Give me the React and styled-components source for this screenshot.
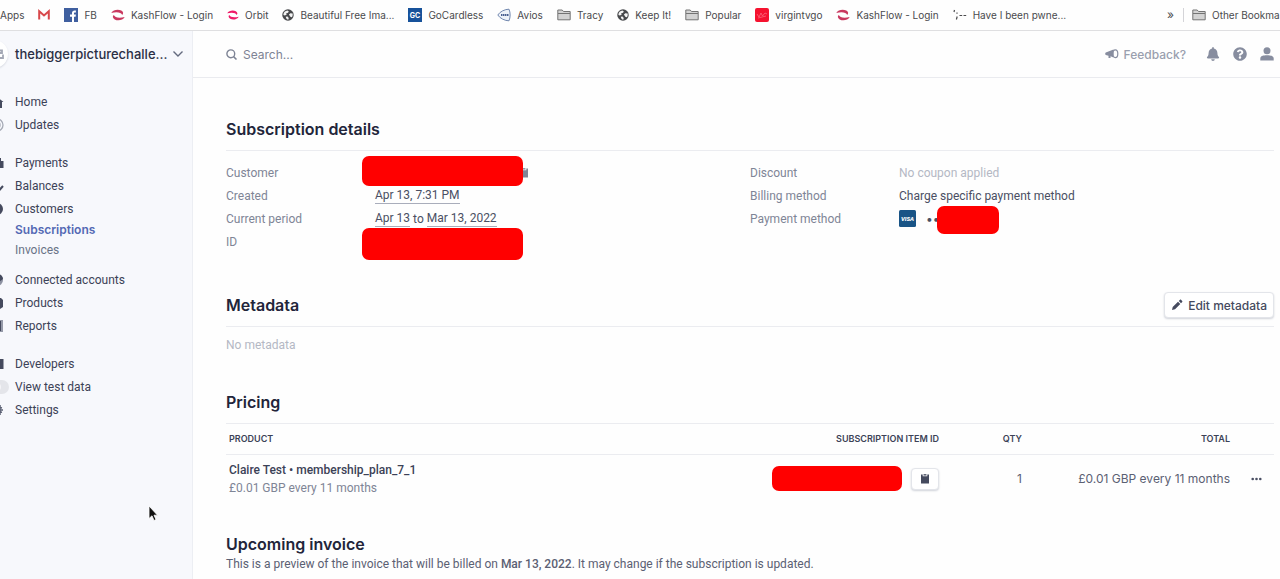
import styled, { createGlobalStyle } from "styled-components";
import { FaBell, FaQuestionCircle } from "react-icons/fa";

const inter = `"Inter", "Liberation Sans", sans-serif`;

const GlobalStyle = createGlobalStyle`
  * {
    box-sizing: border-box;
  }
  body {
    margin: 0;
    overflow-x: hidden;
    background: #fefefe;
    color: #3c4257;
    font-family: "Roboto", "Liberation Sans", sans-serif;
    font-size: 12px;
    line-height: 18px;
  }
  a {
    color: inherit;
    text-decoration: none;
  }
  button, input {
    font-family: ${inter};
  }
`;

const Page = styled.div`
  display: flex;
  flex-direction: column;
  min-height: 100vh;
`;

const BookmarkBar = styled.nav`
  display: flex;
  align-items: center;
  gap: 14px;
  height: 31px;
  border-bottom: 1px solid #dfdfe1;
  background: #fefefe;
  color: #4a4a4d;
  font-family: ${inter};
  font-size: 10px;
  white-space: nowrap;
  overflow: hidden;
`;

const Bookmark = styled.a`
  display: flex;
  align-items: center;
  flex-shrink: 0;
  gap: 6px;
`;

const BookmarkSpacer = styled.div`
  flex: 1;
`;

const OtherBookmarks = styled.div`
  display: flex;
  align-items: center;
  flex: 0 0 113px;
  gap: 8px;
`;

const Chevrons = styled.span`
  width: 8px;
  font-size: 12px;
`;

const Divider = styled.span`
  width: 1px;
  height: 14px;
  background: #d4d4d8;
`;

const Body = styled.div`
  display: flex;
  flex: 1;
`;

const Sidebar = styled.aside`
  flex: 0 0 193px;
  min-width: 0;
  border-right: 1px solid #eceef3;
  background: #f7f8fc;
`;

const Account = styled.button`
  display: flex;
  align-items: center;
  width: 100%;
  height: 46px;
  padding: 0 8px 0 0;
  border: 0;
  background: none;
  color: #2a2f45;
  font-size: 13px;
  font-weight: 500;
  text-align: left;
`;

const AccountName = styled.span`
  flex: 1;
  white-space: nowrap;
`;

const Avatar = styled.span`
  display: flex;
  align-items: center;
  justify-content: flex-end;
  width: 20px;
  height: 28px;
  margin-left: -12px;
  margin-right: 7px;
  padding-right: 4px;
  border-radius: 0 14px 14px 0;
  background: #fff;
  box-shadow: 0 1px 2px #d5d8e0;
`;

const Menu = styled.nav`
  display: flex;
  flex-direction: column;
  gap: 15px;
  padding-top: 13px;
`;

const MenuGroup = styled.div`
  display: flex;
  flex-direction: column;
`;

const MenuItem = styled.a`
  display: flex;
  align-items: center;
  gap: 11px;
  height: 23px;
  margin-left: -12px;
  color: #3c4257;
`;

const SubMenu = styled.div`
  display: flex;
  flex-direction: column;
  padding: 0 0 8px 15px;
`;

const SubItem = styled.a`
  line-height: 20px;
  color: ${(props) => (props.$active ? "#5469b4" : "#697386")};
  font-family: ${(props) => (props.$active ? inter : "inherit")};
  font-weight: ${(props) => (props.$active ? 600 : 400)};
`;

const Main = styled.main`
  flex: 1;
  min-width: 0;
`;

const TopBar = styled.header`
  display: flex;
  align-items: center;
  height: 47px;
  padding: 0 6px 0 33px;
  border-bottom: 1px solid #eaebef;
  color: #878d9f;
`;

const SearchBox = styled.label`
  display: flex;
  align-items: center;
  flex: 1;
  gap: 6px;
`;

const SearchInput = styled.input`
  flex: 1;
  padding: 0;
  border: 0;
  outline: 0;
  background: none;
  font-size: 12px;
  &::placeholder {
    color: #7d8394;
    opacity: 1;
  }
`;

const Feedback = styled.button`
  display: flex;
  align-items: center;
  gap: 5px;
  margin-right: 20px;
  padding: 0;
  border: 0;
  background: none;
  color: #9a9fae;
  font-size: 12px;
  font-weight: 500;
`;

const IconButton = styled.button`
  display: flex;
  margin-right: ${(props) => (props.$last ? 0 : 13)}px;
  padding: 0;
  border: 0;
  background: none;
  color: #878d9f;
`;

const Content = styled.div`
  padding: 30px 6px 0 33px;
`;

const Section = styled.section`
  margin-bottom: ${(props) => props.$gap}px;
`;

const SectionHeader = styled.div`
  display: flex;
  align-items: center;
  justify-content: space-between;
  height: 43px;
  border-bottom: 1px solid #ebecf0;
`;

const Title = styled.h2`
  margin: 0;
  color: #22253a;
  font-family: ${inter};
  font-size: 16px;
  line-height: 20px;
  font-weight: 600;
`;

const Columns = styled.div`
  display: grid;
  grid-template-columns: 1fr 1fr;
  padding-top: 10px;
`;

const Details = styled.dl`
  display: grid;
  grid-template-columns: 149px 1fr;
  grid-auto-rows: 23px;
  align-items: center;
  align-content: start;
  margin: 0;
`;

const Term = styled.dt`
  color: #7f8596;
`;

const Value = styled.dd`
  display: flex;
  align-items: center;
  position: relative;
  height: 23px;
  margin: 0;
  gap: 3px;
  color: ${(props) => (props.$muted ? "#b4b8c4" : "#4a4f63")};
`;

const DateText = styled.span`
  border-bottom: 1px solid #a9adbb;
  line-height: 15px;
`;

const Redaction = styled.span`
  display: block;
  width: ${(props) => props.$width}px;
  height: ${(props) => props.$height}px;
  border-radius: 7px;
  background: #f00;
`;

const Cover = styled(Redaction)`
  position: absolute;
  top: ${(props) => props.$top}px;
  left: ${(props) => props.$left}px;
`;

const CopyMark = styled.span`
  display: flex;
  margin-left: 144px;
  color: #7f8596;
`;

const CardDots = styled.span`
  margin-left: 7px;
  font-family: ${inter};
  font-size: 12px;
`;

const Button = styled.button`
  display: flex;
  align-items: center;
  justify-content: center;
  gap: 5px;
  height: ${(props) => (props.$small ? 22 : 26)}px;
  padding: 0 ${(props) => (props.$small ? 8 : 6)}px;
  border: 1px solid #e3e5ea;
  border-radius: 4px;
  background: #fff;
  box-shadow: 0 1px 2px #d0d3da;
  color: #454a5e;
  font-size: 12px;
  font-weight: 500;
`;

const Empty = styled.p`
  margin: 0;
  padding-top: 9px;
  color: #b4b8c4;
`;

const Table = styled.table`
  width: 100%;
  border-collapse: collapse;
  table-layout: fixed;
`;

const HeadCell = styled.th`
  width: ${(props) => (props.$width ? `${props.$width}px` : "auto")};
  height: 30px;
  padding: 0 0 0 3px;
  border-bottom: 1px solid #ebecf0;
  font-family: ${inter};
  font-size: 9px;
  font-weight: 600;
  text-align: ${(props) => props.$align || "left"};
`;

const Cell = styled.td`
  height: 49px;
  padding: 0 0 0 3px;
  color: #5b6073;
  font-family: ${(props) => (props.$align ? inter : "inherit")};
  text-align: ${(props) => props.$align || "left"};
`;

const ProductName = styled.div`
  color: #3c4257;
  font-weight: 500;
`;

const ProductPrice = styled.div`
  color: #7f8596;
`;

const ItemId = styled.div`
  display: flex;
  align-items: center;
  justify-content: flex-end;
  gap: 9px;
`;

const MoreButton = styled.button`
  display: inline-flex;
  padding: 0 12px 0 0;
  border: 0;
  background: none;
  color: #4a4f63;
  vertical-align: middle;
`;

const Note = styled.p`
  margin: 0;
  color: #5b6073;
  line-height: 20px;
`;

const Strong = styled.strong`
  font-weight: 500;
`;

const Pointer = styled.svg`
  position: fixed;
  top: 505px;
  left: 148px;
`;

const GmailIcon = () => (
  <svg width="12" height="12" viewBox="0 0 12 12">
    <path d="M1.2 10.500V2.200L6 6.400l4.800-4.200v8.300" fill="none" stroke="#d8474a" strokeWidth="2" />
  </svg>
);

const FacebookIcon = () => (
  <svg width="14" height="14" viewBox="0 0 14 14">
    <rect width="14" height="14" fill="#3f5f9f" />
    <path d="M8 14V8.800H6V6.600h2V5c0-1.800 1-2.600 2.600-2.600h1.300v2h-1c-.7 0-.9.300-.9.900v1.300h1.900l-.3 2.200H10V14z" fill="#fff" />
  </svg>
);

const SwirlIcon = ({ color = "#c9385f", size = 14 }) => (
  <svg width={size} height={size} viewBox="0 0 14 14">
    <path d="M.3 5C2 1.800 7 .8 10.300 2.600c2.200 1.300 2.400 3.200.9 4.300-1-2.400-5-3.400-10.900-1.900z" fill={color} />
    <path d="M13.700 9C12 12.200 7 13.200 3.700 11.400c-2.200-1.300-2.400-3.200-.9-4.300 1 2.400 5 3.400 10.900 1.900z" fill={color} />
  </svg>
);

const GlobeIcon = () => (
  <svg width="12" height="12" viewBox="0 0 13 13">
    <circle cx="6.500" cy="6.500" r="6.200" fill="#47484b" />
    <path d="M1.500 6.500C1.500 3.500 3.500 1.800 6 1.500L7.500 3 6 4.200l-1.500.5.5 1.500-2 .8zM7.500 6l1.500-1.500 2.500.5c.3 1.500 0 3-.8 4L9 8.500zM4 8.500l2-.3 1.300 1.500-.5 2C5.500 11.600 4.500 10.500 4 8.500z" fill="#f3f3f3" />
  </svg>
);

const GoCardlessIcon = () => (
  <svg width="14" height="14" viewBox="0 0 14 14">
    <rect width="14" height="14" fill="#17529a" />
    <text x="7" y="9.500" fill="#fff" fontSize="7" fontWeight="700" textAnchor="middle">GC</text>
  </svg>
);

const AviosIcon = () => (
  <svg width="14" height="14" viewBox="0 0 14 14">
    <path d="M.8 7C3 3.500 8 1.200 12 1.200c1.500 3.500 1.500 8 0 11.600C8 12.800 3 10.500.8 7z" fill="#eef2f9" stroke="#7187ae" />
    <path d="M4 7h8" stroke="#4a6090" strokeWidth="2" strokeDasharray="1.500 .5" />
  </svg>
);

const FolderIcon = () => (
  <svg width="14" height="12" viewBox="0 0 14 12">
    <path d="M.8 10.800V1h4.400l1.300 1.500h6.700v8.300z" fill="#d3d3d3" stroke="#747474" />
    <path d="M1 4.500h12" stroke="#747474" />
  </svg>
);

const VirginIcon = () => (
  <svg width="14" height="14" viewBox="0 0 14 14">
    <rect width="14" height="14" rx="2" fill="#f5122f" />
    <path d="M2 6l2 3 2-4 1.500 3L10 5l2 1M3 10l8-2" fill="none" stroke="#f9697e" strokeWidth=".8" />
  </svg>
);

const PwnedIcon = () => (
  <svg width="14" height="14" viewBox="0 0 14 14">
    <path d="M1.500 2l-.5 2M4 4.500v1.300M4.200 8.500l-.8 3M6.500 7.500h2.700M10.500 7.500h2.700" stroke="#4a4a4d" strokeWidth="1.200" />
  </svg>
);

const ShopIcon = () => (
  <svg width="12" height="14" viewBox="0 0 12 14">
    <path d="M3 3.500h7v2.500H6v5h5V7.500" fill="none" stroke="#a4a8b5" strokeWidth="1.800" />
  </svg>
);

const ChevronIcon = () => (
  <svg width="12" height="8" viewBox="0 0 12 8">
    <path d="M1.500 1.500L6 6l4.500-4.500" fill="none" stroke="#636a7e" strokeWidth="1.400" />
  </svg>
);

const SearchIcon = () => (
  <svg width="11" height="11" viewBox="0 0 11 11">
    <circle cx="4.800" cy="4.800" r="3.900" fill="none" stroke="#7d8394" strokeWidth="1.400" />
    <path d="M7.600 7.600l2.900 2.900" stroke="#7d8394" strokeWidth="1.500" />
  </svg>
);

const MegaphoneIcon = () => (
  <svg width="14" height="12" viewBox="0 0 14 12">
    <path d="M8.500 1.500v8L5.500 8.300V10H3.500V7.800L.8 7C0 6.500 0 5 .8 4.500z" fill="#878d9f" />
    <ellipse cx="10.300" cy="5.700" rx="2.500" ry="3.900" fill="none" stroke="#878d9f" strokeWidth="1.200" />
  </svg>
);

const PersonIcon = () => (
  <svg width="14" height="14" viewBox="0 0 14 14">
    <circle cx="7" cy="3.700" r="3.500" fill="currentColor" />
    <path d="M.3 13.500v-2C.3 9 3 8.300 7 8.300s6.700.7 6.700 3.200v2z" fill="currentColor" />
  </svg>
);

const ClipboardIcon = () => (
  <svg width="10" height="11" viewBox="0 0 10 11">
    <path d="M1 1.500h1.700v1.800h4.600V1.500H9v9H1z" fill="currentColor" />
    <path d="M3.500 2.500V1.300h.8a.8.800 0 0 1 1.400 0h.8v1.200z" fill="currentColor" />
  </svg>
);

const PencilIcon = () => (
  <svg width="12" height="12" viewBox="0 0 12 12">
    <path d="M1 11l.7-3L7 2.700 9.300 5 4 10.300zM7.800 2L9 .8c.3-.3.700-.3 1 0L11.200 2c.3.300.3.700 0 1L10 4.200z" fill="currentColor" />
  </svg>
);

const DotsIcon = () => (
  <svg width="11" height="4" viewBox="0 0 11 4">
    <circle cx="1.700" cy="2" r="1.300" fill="currentColor" />
    <circle cx="5.500" cy="2" r="1.300" fill="currentColor" />
    <circle cx="9.300" cy="2" r="1.300" fill="currentColor" />
  </svg>
);

const VisaIcon = () => (
  <svg width="17" height="17" viewBox="0 0 17 17">
    <rect width="17" height="17" rx="1.500" fill="#195486" />
    <text x="8.500" y="10.700" fill="#fff" fontSize="6" fontWeight="800" fontStyle="italic" textAnchor="middle">VISA</text>
  </svg>
);

const menuShapes = {
  home: <path d="M8 2l7.500 6H14v6h-3v-4H6v4H3V7H1z" />,
  updates: (
    <g fill="none" stroke="#a5a9b5" strokeWidth="1.300">
      <circle cx="9" cy="8" r="6" />
      <circle cx="9" cy="8" r="3" />
    </g>
  ),
  payments: <path d="M2 6h9V3h2v3h2.500v7H2z" />,
  balances: <path d="M8 10l3 2.500L15 8" fill="none" stroke="#454a5e" strokeWidth="2" />,
  customers: <circle cx="9" cy="8" r="6" />,
  connected: (
    <g>
      <circle cx="9" cy="8" r="6" fill="#8d92a2" />
      <path d="M7 2c5-1 8 2 8 5l-4 3z" />
    </g>
  ),
  products: <path d="M2 3h11l2 2v7l-3 2H2z" />,
  reports: (
    <g>
      <path d="M2 2h13v12H2z" fill="#9599a8" />
      <path d="M10 3h3v10h-3z" />
    </g>
  ),
  developers: <path d="M1 3h14.500v10H1z" />,
  settings: <path d="M8 8h7M12 3v10M10 5l4 1M10 11l4-1" fill="none" stroke="#5b6073" strokeWidth="1.500" />,
};

const MenuIcon = ({ name }) => (
  <svg width="16" height="16" viewBox="0 0 16 16" fill="#454a5e">
    {menuShapes[name]}
  </svg>
);

const Toggle = styled.svg`
  margin-right: -6px;
`;

const ToggleIcon = () => (
  <Toggle width="22" height="14" viewBox="0 0 22 14">
    <rect width="21" height="14" rx="7" fill="#e4e5ea" />
    <circle cx="8" cy="7" r="5" fill="#f5f5f8" />
  </Toggle>
);

const bookmarks = [
  { id: 1, icon: <GmailIcon /> },
  { id: 2, icon: <FacebookIcon />, name: "FB" },
  { id: 3, icon: <SwirlIcon />, name: "KashFlow - Login" },
  { id: 4, icon: <SwirlIcon color="#ef1b68" size={12} />, name: "Orbit" },
  { id: 5, icon: <GlobeIcon />, name: "Beautiful Free Ima..." },
  { id: 6, icon: <GoCardlessIcon />, name: "GoCardless" },
  { id: 7, icon: <AviosIcon />, name: "Avios" },
  { id: 8, icon: <FolderIcon />, name: "Tracy" },
  { id: 9, icon: <GlobeIcon />, name: "Keep It!" },
  { id: 10, icon: <FolderIcon />, name: "Popular" },
  { id: 11, icon: <VirginIcon />, name: "virgintvgo" },
  { id: 12, icon: <SwirlIcon />, name: "KashFlow - Login" },
  { id: 13, icon: <PwnedIcon />, name: "Have I been pwne..." },
];

const Link = ({ icon, children }) => (
  <MenuItem href="#">
    <MenuIcon name={icon} />
    {children}
  </MenuItem>
);

const App = () => {
  return (
    <Page>
      <GlobalStyle />
      <BookmarkBar>
        <Bookmark href="#">Apps</Bookmark>
        {bookmarks.map((item) => (
          <Bookmark href="#" key={item.id} aria-label={item.name || "Mail"}>
            {item.icon}
            {item.name}
          </Bookmark>
        ))}
        <BookmarkSpacer />
        <OtherBookmarks>
          <Chevrons>»</Chevrons>
          <Divider />
          <Bookmark href="#">
            <FolderIcon />
            Other Bookma
          </Bookmark>
        </OtherBookmarks>
      </BookmarkBar>
      <Body>
        <Sidebar>
          <Account>
            <Avatar>
              <ShopIcon />
            </Avatar>
            <AccountName>thebiggerpicturechalle...</AccountName>
            <ChevronIcon />
          </Account>
          <Menu>
            <MenuGroup>
              <Link icon="home">Home</Link>
              <Link icon="updates">Updates</Link>
            </MenuGroup>
            <MenuGroup>
              <Link icon="payments">Payments</Link>
              <Link icon="balances">Balances</Link>
              <Link icon="customers">Customers</Link>
              <SubMenu>
                <SubItem href="#" $active>
                  Subscriptions
                </SubItem>
                <SubItem href="#">Invoices</SubItem>
              </SubMenu>
              <Link icon="connected">Connected accounts</Link>
              <Link icon="products">Products</Link>
              <Link icon="reports">Reports</Link>
            </MenuGroup>
            <MenuGroup>
              <Link icon="developers">Developers</Link>
              <MenuItem href="#">
                <ToggleIcon />
                View test data
              </MenuItem>
              <Link icon="settings">Settings</Link>
            </MenuGroup>
          </Menu>
        </Sidebar>
        <Main>
          <TopBar>
            <SearchBox>
              <SearchIcon />
              <SearchInput placeholder="Search..." aria-label="Search" />
            </SearchBox>
            <Feedback>
              <MegaphoneIcon />
              Feedback?
            </Feedback>
            <IconButton aria-label="Notifications">
              <FaBell size={14} />
            </IconButton>
            <IconButton aria-label="Help">
              <FaQuestionCircle size={14} />
            </IconButton>
            <IconButton aria-label="Profile" $last>
              <PersonIcon />
            </IconButton>
          </TopBar>
          <Content>
            <Section $gap={31}>
              <SectionHeader>
                <Title>Subscription details</Title>
              </SectionHeader>
              <Columns>
                <Details>
                  <Term>Customer</Term>
                  <Value>
                    <CopyMark>
                      <ClipboardIcon />
                    </CopyMark>
                    <Cover $width={161} $height={30} $top={-5} $left={-13} />
                  </Value>
                  <Term>Created</Term>
                  <Value>
                    <DateText>Apr 13, 7:31 PM</DateText>
                  </Value>
                  <Term>Current period</Term>
                  <Value>
                    <DateText>Apr 13</DateText> to <DateText>Mar 13, 2022</DateText>
                  </Value>
                  <Term>ID</Term>
                  <Value>
                    <Cover $width={161} $height={32} $top={-2} $left={-13} />
                  </Value>
                </Details>
                <Details>
                  <Term>Discount</Term>
                  <Value $muted>No coupon applied</Value>
                  <Term>Billing method</Term>
                  <Value>Charge specific payment method</Value>
                  <Term>Payment method</Term>
                  <Value>
                    <VisaIcon />
                    <CardDots>••••</CardDots>
                    <Cover $width={62} $height={28} $top={-1} $left={38} />
                  </Value>
                </Details>
              </Columns>
            </Section>
            <Section $gap={27}>
              <SectionHeader>
                <Title>Metadata</Title>
                <Button>
                  <PencilIcon />
                  Edit metadata
                </Button>
              </SectionHeader>
              <Empty>No metadata</Empty>
            </Section>
            <Section $gap={31}>
              <SectionHeader>
                <Title>Pricing</Title>
              </SectionHeader>
              <Table>
                <thead>
                  <tr>
                    <HeadCell>PRODUCT</HeadCell>
                    <HeadCell $width={200} $align="right">
                      SUBSCRIPTION ITEM ID
                    </HeadCell>
                    <HeadCell $width={83} $align="right">
                      QTY
                    </HeadCell>
                    <HeadCell $width={208} $align="right">
                      TOTAL
                    </HeadCell>
                    <HeadCell $width={44} aria-label="Actions" />
                  </tr>
                </thead>
                <tbody>
                  <tr>
                    <Cell>
                      <ProductName>Claire Test • membership_plan_7_1</ProductName>
                      <ProductPrice>£0.01 GBP every 11 months</ProductPrice>
                    </Cell>
                    <Cell>
                      <ItemId>
                        <Redaction $width={130} $height={25} />
                        <Button $small aria-label="Copy ID">
                          <ClipboardIcon />
                        </Button>
                      </ItemId>
                    </Cell>
                    <Cell $align="right">1</Cell>
                    <Cell $align="right">£0.01 GBP every 11 months</Cell>
                    <Cell $align="right">
                      <MoreButton aria-label="More">
                        <DotsIcon />
                      </MoreButton>
                    </Cell>
                  </tr>
                </tbody>
              </Table>
            </Section>
            <Section $gap={0}>
              <Title>Upcoming invoice</Title>
              <Note>
                This is a preview of the invoice that will be billed on <Strong>Mar 13, 2022</Strong>. It may change if
                the subscription is updated.
              </Note>
            </Section>
          </Content>
        </Main>
      </Body>
      <Pointer width="10" height="17" viewBox="0 0 10 17">
        <path d="M1 1v12.500l3-2.700 2 4.700 2-1-2-4.300h3.500z" fill="#111" stroke="#fff" strokeWidth=".8" />
      </Pointer>
    </Page>
  );
};

export default App;
